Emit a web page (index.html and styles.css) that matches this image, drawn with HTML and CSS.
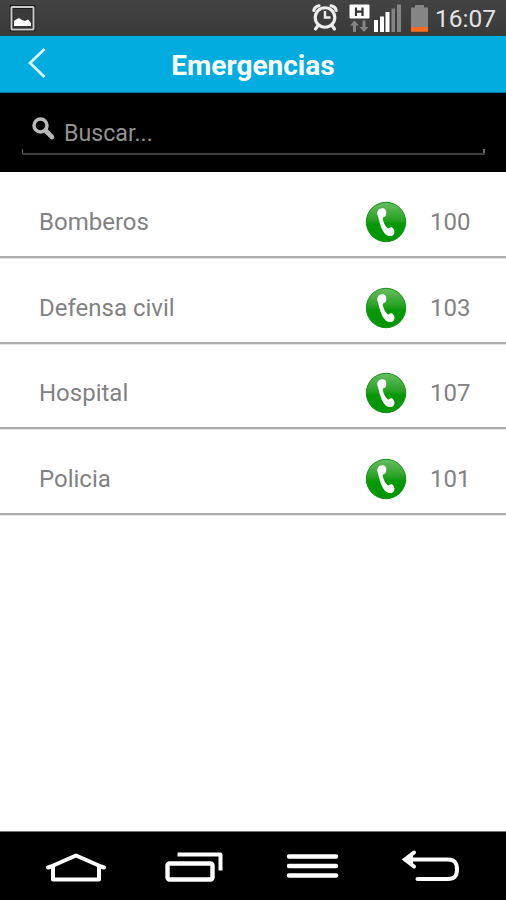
FILE: index.html
```html
<!DOCTYPE html>
<html lang="es">
  <head>
    <meta charset="UTF-8" />
    <meta name="viewport" content="width=device-width, initial-scale=1.0" />
    <title>Emergencias</title>
    <link rel="stylesheet" href="styles.css">
  </head>
  <body>
    <!-- shared call icon -->
    <svg class="hidden">
      <defs>
        <linearGradient id="green" x1="0" y1="0" x2="0" y2="1">
          <stop offset="0" stop-color="#68bd61" />
          <stop offset="0.45" stop-color="#27a122" />
          <stop offset="0.55" stop-color="#079807" />
          <stop offset="1" stop-color="#009600" />
        </linearGradient>
        <symbol id="call" viewBox="0 0 42 42">
          <circle cx="21" cy="21" r="19.700" fill="url(#green)" stroke="#159115" stroke-width="1" />
          <path d="M13 9.500C14.500 7 18.500 6.500 20.500 8.500C21.500 10 21.700 13.500 20.500 15C19.700 16.200 18 16 17.700 17.200C18 20.500 20 25 22.700 27.300C23.800 27.800 24.500 26.300 26 26.300C28 26.200 29.600 29 29.500 31.200C29.300 34.200 26.500 35.500 23.500 35C19.500 33.700 17 29 15.200 23.500C14 19.500 13.500 16.500 12.500 14C12 12.500 12.200 10.800 13 9.500Z" fill="#fff" />
        </symbol>
      </defs>
    </svg>

    <div class="screen">
      <div class="status-bar">
        <svg class="picture-icon" width="26" height="26" viewBox="0 0 26 26">
          <rect x="1.500" y="2" width="22" height="22.500" fill="#3a3a3a" stroke="#111" stroke-width="3.500" />
          <rect x="1.500" y="2" width="22" height="22.500" rx="0.500" fill="none" stroke="#ccc" stroke-width="2" />
          <path d="M4 21V16L7 14L9 13L12 15L15 16L18 14.500L21 18V21Z" fill="#fff" />
        </svg>
        <div class="status-icons">
          <svg class="alarm-icon" width="26" height="27" viewBox="0 0 26 27">
            <g fill="none" stroke="#eee" stroke-width="3.100" stroke-linecap="round">
              <circle cx="13" cy="13.500" r="9.800" />
              <path d="M1.800 6.500Q2.500 2.500 7 1.800M24.200 6.500Q23.500 2.500 19 1.800M6 21.500L3.500 25M20 21.500L22.500 25" />
              <path d="M13 7V13.500H18.500" stroke-width="2.400" stroke-linecap="butt" />
            </g>
          </svg>
          <svg class="data-icon" width="21" height="29" viewBox="0 0 21 29">
            <rect x="0.500" y="0.500" width="20" height="14" rx="1" fill="#fff" />
            <path d="M7 3.500V12M13.500 3.500V12M7 7.700H13.500" fill="none" stroke="#333" stroke-width="2.200" />
            <path d="M5.500 16.500L10 21.500H7V28H4V21.500H1ZM15 28L10.500 23H13.500V16.500H16.500V23H19.500Z" fill="#848484" />
          </svg>
          <svg class="signal-icon" width="28" height="28" viewBox="0 0 28 28">
            <path d="M0 16H4V28H0ZM6 12.500H10V28H6ZM11.500 8H15.500V28H11.500Z" fill="#fff" />
            <path d="M17.500 4.500H21V28H17.500ZM23 0.500H27V28H23Z" fill="#858585" />
          </svg>
          <svg class="battery-icon" width="17" height="28" viewBox="0 0 17 28">
            <path d="M4 1H13V3.500H17V23H0V3.500H4Z" fill="#858585" />
            <rect y="23" width="17" height="4.800" fill="#f36d21" />
          </svg>
          <span class="clock">16:07</span>
        </div>
      </div>

      <div class="header">
        <svg class="back" width="18" height="32" viewBox="0 0 18 32">
          <path d="M16.500 2L2 16L16.500 30" fill="none" stroke="#dcf6ff" stroke-width="2.700" />
        </svg>
        <h1>Emergencias</h1>
      </div>

      <div class="search">
        <div class="search-box">
          <svg class="search-icon" width="23" height="23" viewBox="0 0 23 23">
            <circle cx="8.500" cy="8.500" r="6.500" fill="none" stroke="#b8b8b8" stroke-width="3.500" />
            <path d="M13.500 13.500L20 20" stroke="#b8b8b8" stroke-width="4.600" stroke-linecap="round" />
          </svg>
          <span class="placeholder">Buscar...</span>
        </div>
      </div>

      <div class="list">
        <div class="row">
          <span class="name">Bomberos</span>
          <svg class="call" width="42" height="42"><use href="#call" /></svg>
          <span class="number">100</span>
        </div>
        <div class="row">
          <span class="name">Defensa civil</span>
          <svg class="call" width="42" height="42"><use href="#call" /></svg>
          <span class="number">103</span>
        </div>
        <div class="row">
          <span class="name">Hospital</span>
          <svg class="call" width="42" height="42"><use href="#call" /></svg>
          <span class="number">107</span>
        </div>
        <div class="row">
          <span class="name">Policia</span>
          <svg class="call" width="42" height="42"><use href="#call" /></svg>
          <span class="number">101</span>
        </div>
      </div>

      <div class="nav-bar">
        <svg width="62" height="34" viewBox="0 0 62 34">
          <path d="M3 15.500L6 14.500L31 3.500L56 14.500L59 15.500M8 15V27.500H54V15" fill="none" stroke="#fff" stroke-width="4" stroke-linecap="round" stroke-linejoin="round" />
        </svg>
        <svg width="62" height="34" viewBox="0 0 62 34">
          <g fill="none" stroke="#fff" stroke-linejoin="round">
            <rect x="4.500" y="11.500" width="45" height="16" rx="2" stroke-width="4.400" />
            <path d="M14.500 2.500H57.500V18.500" stroke-width="4" />
          </g>
        </svg>
        <svg width="62" height="34" viewBox="0 0 62 34">
          <path d="M8 4.500H55M8 14H55M8 23.500H55" stroke="#fff" stroke-width="4.500" stroke-linecap="round" />
        </svg>
        <svg width="62" height="34" viewBox="0 0 62 34">
          <g fill="none" stroke="#fff" stroke-width="4" stroke-linecap="round">
            <path d="M8 7.500H49C56.500 7.500 58 12 58 17.500C58 23.500 56 27 49 27H18.500" />
            <path d="M15 0.500L6 7.500L15 14.500" />
          </g>
          <path d="M5 7.500L14 1V14Z" fill="#fff" />
        </svg>
      </div>
    </div>
  </body>
</html>
```

FILE: styles.css
```css
* {
  box-sizing: border-box;
}
body {
  margin: 0;
  font-family: Roboto, "Liberation Sans", sans-serif;
  background-color: white;
}
.hidden {
  display: block;
  width: 0;
  height: 0;
}
.screen {
  display: flex;
  flex-direction: column;
  height: 900px;
  overflow: hidden;
}
svg {
  display: block;
  flex-shrink: 0;
  overflow: visible;
}
.status-bar {
  display: flex;
  justify-content: space-between;
  height: 36px;
  padding: 4px 10px 0;
  background: linear-gradient(#434343, #3a3a3a);
  border-bottom: 1px solid #254450;
}
.picture-icon {
  margin-top: 1px;
}
.status-icons {
  display: flex;
}
.data-icon {
  margin-left: 11px;
}
.signal-icon {
  margin-left: 4px;
}
.battery-icon {
  margin-left: 9px;
}
.clock {
  width: 61px;
  margin-left: 7px;
  font-size: 24.5px;
  line-height: 30px;
  white-space: nowrap;
  color: #e4e4e4;
}
.header {
  display: grid;
  grid-template-columns: 60px 1fr 60px;
  height: 57px;
  background-color: #03acdf;
  border-bottom: 1px solid #04779b;
}
.back {
  margin: 11px 0 0 28px;
}
h1 {
  margin: 0;
  font-size: 28px;
  font-weight: bold;
  line-height: 60px;
  text-align: center;
  color: white;
}
.search {
  height: 79px;
  padding: 18px 21px 0 22px;
  background-color: black;
}
.search-box {
  display: flex;
  height: 44px;
  padding: 6px 0 0 10px;
  border-bottom: 2px solid #3f3f3f;
  background: linear-gradient(#666, #666) left bottom / 1px 4px no-repeat,
    linear-gradient(#666, #666) right bottom / 2px 4px no-repeat;
}
.placeholder {
  margin-left: 9px;
  font-size: 23.2px;
  line-height: 32px;
  color: #929292;
}
.list {
  flex: 1;
}
.row {
  display: flex;
  align-items: center;
  height: 85.75px;
  padding: 16px 0 0 39px;
  border-bottom: 2px solid #adadad;
  box-shadow: 0 1px 0 #e6e6e6;
  font-size: 24px;
  color: #828282;
}
.name {
  width: 326px;
}
.number {
  margin-left: 23px;
}
.nav-bar {
  display: flex;
  justify-content: space-between;
  height: 69px;
  padding: 20px 45px 0 45px;
  background-color: black;
  border-top: 1px solid #777;
}
```
